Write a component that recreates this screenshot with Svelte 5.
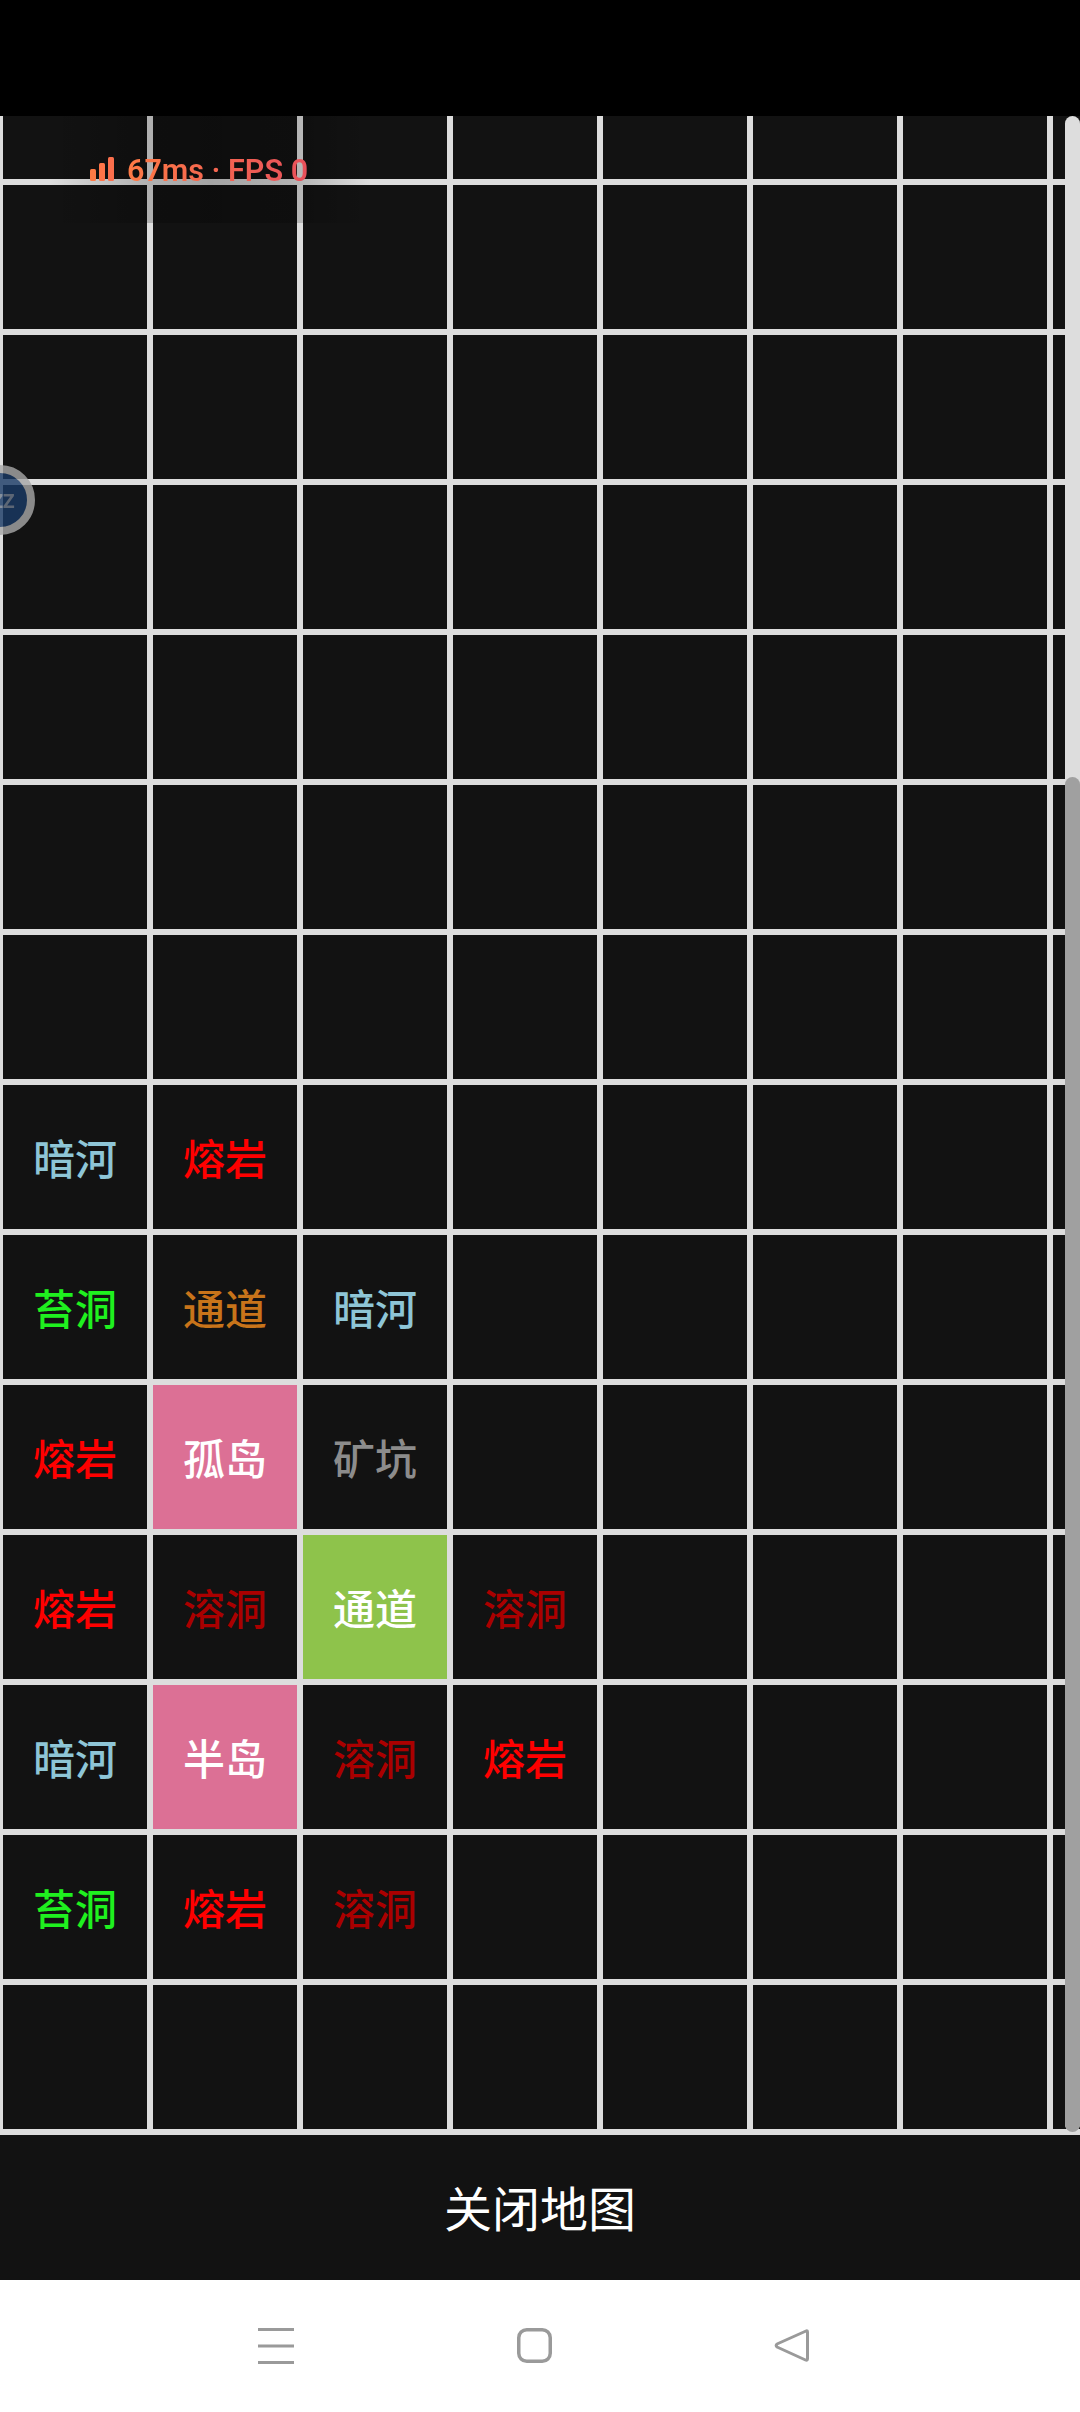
<script>
  // Map rows, top to bottom. Each row holds 8 cells, empty string = nothing discovered
  const labels = [
    ["暗河", "熔岩"],
    ["苔洞", "通道", "暗河"],
    ["熔岩", "孤岛", "矿坑"],
    ["熔岩", "溶洞", "通道", "溶洞"],
    ["暗河", "半岛", "溶洞", "熔岩"],
    ["苔洞", "熔岩", "溶洞"]
  ];

  const kinds = {
    暗河: "river",
    熔岩: "lava",
    苔洞: "moss",
    通道: "tunnel",
    矿坑: "mine",
    溶洞: "karst",
    孤岛: "island",
    半岛: "island"
  };

  const emptyRow = () => Array(8).fill("");
  const rows = [
    ...Array.from({ length: 7 }, emptyRow),
    ...labels.map((row) => [...row, ...Array(8 - row.length).fill("")]),
    emptyRow()
  ];

  // The current room is the lit up tunnel
  const isCurrent = (r, c) => r === 10 && c === 2;
</script>

<div class="screen">
  <div class="top-bar"></div>

  <div class="map">
    <div class="grid">
      {#each rows as row, r}
        {#each row as label, c}
          <div class={`cell ${kinds[label] ?? ""}${isCurrent(r, c) ? " current" : ""}`}>{label}</div>
        {/each}
      {/each}
    </div>

    <div class="net-badge">
      <svg class="signal" viewBox="0 0 25 24" width="25" height="24">
        <rect x="0" y="12" width="6" height="12" rx="1.5" fill="#ff7a45" />
        <rect x="9" y="6" width="6" height="18" rx="1.5" fill="#ff7548" />
        <rect x="18" y="0" width="6" height="24" rx="1.5" fill="#fb6f4c" />
      </svg>
      <span class="net-text">67ms · FPS 0</span>
    </div>

    <div class="scroll-track"><div class="scroll-thumb"></div></div>
  </div>

  <button class="close">关闭地图</button>

  <div class="nav-bar">
    <svg viewBox="0 0 36 36" width="36" height="36">
      <path d="M0 1.5H36M0 18H36M0 34.5H36" stroke="#9a9a9a" stroke-width="3" fill="none" />
    </svg>
    <svg viewBox="0 0 36 36" width="36" height="36">
      <rect x="2.75" y="1.75" width="31.5" height="31.5" rx="8" stroke="#9a9a9a" stroke-width="3.5" fill="none" />
    </svg>
    <svg viewBox="0 0 36 36" width="36" height="36">
      <path d="M32 3 Q33.5 2 33.5 4.5 V30.5 Q33.5 33 31.5 32 L3 19 Q1.5 17.5 3 16 Z" stroke="#9a9a9a" stroke-width="3" stroke-linejoin="round" fill="none" />
    </svg>
  </div>

  <div class="float-ball"><span>ZZ</span></div>
</div>

<style>
  :global(body) {
    margin: 0;
    background: #000;
  }

  .screen {
    position: relative;
    width: 1080px;
    height: 2412px;
    display: flex;
    flex-direction: column;
    overflow: hidden;
    font-family: "Noto Sans CJK SC", "Noto Sans", sans-serif;
  }

  .top-bar {
    height: 116px;
    background: #000;
    flex: none;
  }

  .map {
    position: relative;
    height: 2019px;
    flex: none;
    overflow: hidden;
    background: #121212;
  }

  .grid {
    display: grid;
    grid-template-columns: repeat(8, 150px);
    grid-auto-rows: 150px;
    margin-top: -84px;
    border-bottom: 3px solid #dddddd;
  }

  .cell {
    box-sizing: border-box;
    border: 3px solid #dddddd;
    background: #121212;
    display: flex;
    align-items: center;
    justify-content: center;
    font-size: 42px;
    font-weight: 500;
    line-height: 1;
  }

  .river { color: #8ec5d6; }
  .lava { color: #ff0000; }
  .moss { color: #1ff01f; }
  .tunnel { color: #c8741a; }
  .mine { color: #8c8c8c; }
  .karst { color: #aa0000; }

  .island {
    background: #dc7095;
    color: #fff;
  }

  .current {
    background: #8ec34b;
    color: #fff;
  }

  .net-badge {
    position: absolute;
    top: 0;
    left: 50px;
    width: 320px;
    height: 107px;
    padding: 41px 0 0 40px;
    box-sizing: border-box;
    display: flex;
    align-items: flex-start;
    gap: 12px;
    background: linear-gradient(90deg, rgba(0, 0, 0, 0), rgba(0, 0, 0, 0.2) 30%, rgba(0, 0, 0, 0.26) 50%, rgba(0, 0, 0, 0.2) 75%, rgba(0, 0, 0, 0));
  }

  .signal {
    flex: none;
  }

  .net-text {
    font-family: Roboto, sans-serif;
    font-size: 30.5px;
    font-weight: 600;
    line-height: 28px;
    white-space: nowrap;
    background: linear-gradient(90deg, #ff7a45, #e8505b);
    -webkit-background-clip: text;
    background-clip: text;
    color: transparent;
  }

  .scroll-track {
    position: absolute;
    top: 0;
    right: 0;
    bottom: 3px;
    width: 15px;
    border-radius: 8px;
    background: #dddddd;
  }

  .scroll-thumb {
    position: absolute;
    left: 0;
    right: 0;
    top: 661px;
    bottom: 0;
    border-radius: 8px;
    background: #a0a0a0;
  }

  .close {
    height: 145px;
    flex: none;
    border: 0;
    padding: 0 0 3px;
    background: #121212;
    color: #fff;
    font-family: inherit;
    font-size: 48px;
    font-weight: 400;
  }

  .nav-bar {
    flex: 1;
    background: #fff;
    display: flex;
    padding: 48px 0 0 258px;
    gap: 222px;
    align-items: flex-start;
  }

  .float-ball {
    position: absolute;
    left: -35px;
    top: 465px;
    width: 70px;
    height: 70px;
    box-sizing: border-box;
    border: 8px solid #a8a8a8;
    border-radius: 50%;
    background: #1a3a66;
    opacity: 0.8;
    display: flex;
    align-items: center;
    justify-content: center;
    padding-left: 6px;
  }

  .float-ball span {
    font-family: "Noto Sans", sans-serif;
    font-size: 20px;
    font-weight: 700;
    color: #6f7c8e;
  }
</style>
